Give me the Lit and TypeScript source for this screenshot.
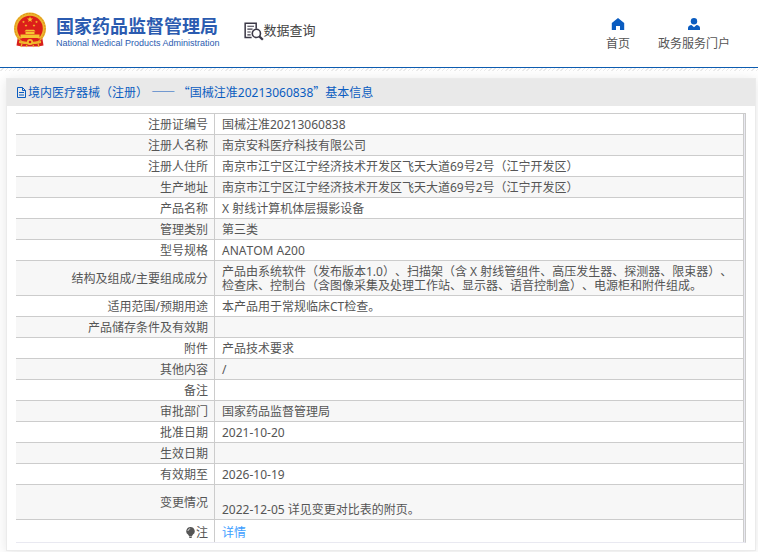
import { LitElement, html, css, svg, nothing } from "lit";
import { customElement } from "lit/decorators.js";

interface Row {
  label: string;
  value: string;
  /** The value starts with an empty line. */
  leadingBreak?: boolean;
}

const ROWS: Row[] = [
  { label: "注册证编号", value: "国械注准20213060838" },
  { label: "注册人名称", value: "南京安科医疗科技有限公司" },
  { label: "注册人住所", value: "南京市江宁区江宁经济技术开发区飞天大道69号2号（江宁开发区）" },
  { label: "生产地址", value: "南京市江宁区江宁经济技术开发区飞天大道69号2号（江宁开发区）" },
  { label: "产品名称", value: "X 射线计算机体层摄影设备" },
  { label: "管理类别", value: "第三类" },
  { label: "型号规格", value: "ANATOM A200" },
  {
    label: "结构及组成/主要组成成分",
    value:
      "产品由系统软件（发布版本1.0）、扫描架（含 X 射线管组件、高压发生器、探测器、限束器）、检查床、控制台（含图像采集及处理工作站、显示器、语音控制盒）、电源柜和附件组成。",
  },
  { label: "适用范围/预期用途", value: "本产品用于常规临床CT检查。" },
  { label: "产品储存条件及有效期", value: "" },
  { label: "附件", value: "产品技术要求" },
  { label: "其他内容", value: "/" },
  { label: "备注", value: "" },
  { label: "审批部门", value: "国家药品监督管理局" },
  { label: "批准日期", value: "2021-10-20" },
  { label: "生效日期", value: "" },
  { label: "有效期至", value: "2026-10-19" },
  { label: "变更情况", value: "2022-12-05 详见变更对比表的附页。", leadingBreak: true },
];

const star = (cx: number, cy: number, r: number) => {
  const points = Array.from({ length: 10 }, (_, i) => {
    const a = -Math.PI / 2 + (i * Math.PI) / 5;
    const d = i % 2 ? r * 0.4 : r;
    return `${(cx + d * Math.cos(a)).toFixed(2)},${(cy + d * Math.sin(a)).toFixed(2)}`;
  }).join(" ");
  return svg`<polygon points=${points} fill="#f8c62c" />`;
};

@customElement("site-header")
export class SiteHeader extends LitElement {
  static styles = css`
    :host {
      display: block;
    }
    .bar {
      display: flex;
      align-items: center;
      justify-content: space-between;
      height: 67px;
      padding: 0 28px 0 13px;
      background: #fff;
      border-bottom: 1px solid #0d5cb0;
    }
    .hatch {
      height: 3px;
      background: repeating-linear-gradient(135deg, #fff 0 2px, #ebebeb 2px 3px);
    }
    .left,
    .brand,
    .search,
    .nav {
      display: flex;
      align-items: center;
    }
    .left {
      gap: 24px;
      padding-bottom: 4px;
    }
    a {
      color: inherit;
      text-decoration: none;
    }
    .brand {
      gap: 9px;
      color: #2b5bb0;
    }
    .names {
      display: flex;
      flex-direction: column;
      white-space: nowrap;
    }
    .zh {
      font-size: 18px;
      font-weight: 700;
      line-height: 22px;
    }
    .en {
      font: 9px/12px "Liberation Sans", Arial, sans-serif;
    }
    .emblem {
      margin-bottom: 4px;
    }
    .search {
      color: #444;
      font-size: 13px;
      line-height: 18px;
      padding-bottom: 3px;
    }
    .search svg {
      margin-top: 3px;
    }
    .nav {
      gap: 28px;
      padding-top: 3px;
    }
    .item {
      display: flex;
      flex-direction: column;
      align-items: center;
      gap: 5px;
      line-height: 18px;
      font-size: 12px;
      color: #555;
    }
    svg {
      display: block;
      flex: none;
    }
  `;

  render() {
    return html`
      <header class="bar">
        <div class="left">
          <a class="brand" href="#">
            <svg class="emblem" width="34" height="36" viewBox="0 0 34 36" aria-hidden="true">
              <path d="M5 24 3.500 33.500 9 34.500h16l5.500-1L29 24Z" fill="#d8201c" />
              <circle cx="17" cy="16.500" r="16" fill="#eeb52c" />
              <circle cx="17" cy="16.500" r="15" fill="none" stroke="#d98d1c" stroke-width="1" stroke-dasharray="2 1" />
              <circle cx="17" cy="16.500" r="12.800" fill="#dc1e1a" />
              ${star(17, 7.5, 3.2)} ${star(10.5, 10, 1.5)} ${star(23.5, 10, 1.5)}
              ${star(13, 13.5, 1.5)} ${star(21, 13.5, 1.5)}
              <path d="M11.500 19.500h11l-1.500-1.700h-8zM12.500 20h9v2h-9zM7.500 22.500h19v3.500h-19z" fill="#f5c431" />
              <path d="M6.500 26.500h21c-2 3-6 4.300-10.500 4.300s-8.500-1.300-10.500-4.300Z" fill="#dc1e1a" />
              <path d="M6 29c4 0 7 1 11 1s7-1 11-1v2c-3 1-7 1-11 1s-8 0-11-1Z" fill="#efb42b" />
              <circle cx="17" cy="30" r="3" fill="#f3bd2d" />
              <circle cx="17" cy="30" r="1.300" fill="#dc1e1a" />
              <path d="M9 31.500 8 35M25 31.500l1 3.500M14 33l-1 2M20 33l1 2" stroke="#efb42b" stroke-width="1.200" />
            </svg>
            <span class="names">
              <span class="zh">国家药品监督管理局</span>
              <span class="en" lang="en">National Medical Products Administration</span>
            </span>
          </a>
          <a class="search" href="#">
            <svg width="20" height="19" viewBox="0 0 21 20" fill="none" stroke="#3c3947" aria-hidden="true">
              <path d="M8 16.200H1.200V1.200H12.800V7" stroke-width="1.600" />
              <path d="M3.500 4.500h7M3.500 7.500h5.500M3.500 10.500h3.500M3.500 13.500h3.500" stroke-width="1.200" />
              <circle cx="13" cy="12" r="4.300" stroke-width="1.700" />
              <path d="m16 15.200 3.800 3.500" stroke-width="2.400" />
            </svg>
            数据查询
          </a>
        </div>
        <nav class="nav">
          <a class="item" href="#">
            <svg width="14" height="12" viewBox="0 0 14 12" aria-hidden="true">
              <path d="M7 0 .800 5v1.500V12H5V8h4v4h4.200V5Z" fill="#0a5cc0" />
            </svg>
            首页
          </a>
          <a class="item" href="#">
            <svg width="14" height="12" viewBox="0 0 14 12" aria-hidden="true">
              <circle cx="7" cy="3.200" r="3.200" fill="#0a5cc0" />
              <path d="M1 12V10c0-1.800 1.500-2.800 3.500-3L7 9.200 9.500 7c2 .200 3.500 1.200 3.500 3v2Z" fill="#0a5cc0" />
            </svg>
            政务服务门户
          </a>
        </nav>
      </header>
      <div class="hatch"></div>
    `;
  }
}

@customElement("info-card")
export class InfoCard extends LitElement {
  static styles = css`
    :host {
      display: block;
    }
    .card {
      background: #fff;
      border: 1px solid #ebebeb;
      box-shadow: 0 2px 12px rgba(0, 0, 0, 0.1);
    }
    .title {
      display: flex;
      align-items: center;
      height: 27px;
      margin: 0;
      padding: 0 9px;
      background: #e9e9e9;
      color: #0a5cc0;
      font-size: 12px;
      font-weight: 400;
      line-height: 18px;
    }
    .cjk {
      font-family: "Noto Sans CJK SC", sans-serif;
    }
    .title svg {
      flex: none;
      margin-right: 1px;
    }
    .frame {
      margin: 7px 9px;
      padding-right: 1px;
      background: #e9e9f1;
      border-top: 1px solid #ccc;
      border-right: 1px solid #ccc;
      border-bottom: 1px solid #e9e9f1;
    }
    table {
      width: 100%;
      border-spacing: 0;
      table-layout: fixed;
      background: #fff;
      font-size: 12px;
      line-height: 14px;
    }
    .label-col {
      width: 199px;
    }
    th,
    td {
      height: 14px;
      padding: 4px 6px 2px 7px;
      border-right: 1px solid #ccc;
      border-bottom: 1px solid #ccc;
      vertical-align: middle;
    }
    th {
      font-weight: 400;
      text-align: right;
    }
    td {
      text-align: left;
    }
    tr:nth-child(even) {
      background: #f7f7f7;
    }
    tr:last-child > * {
      padding-top: 6px;
      border-bottom: 0;
    }
    .bulb {
      display: inline-block;
      vertical-align: -1px;
    }
    .detail {
      color: #409eff;
      text-decoration: none;
    }
  `;

  render() {
    return html`
      <section class="card">
        <h1 class="title">
          <svg width="11" height="11" viewBox="0 0 11 11" fill="none" stroke="#0a5cc0" stroke-width="1" aria-hidden="true">
            <path d="M1.500.500H6.500L9.500 3.500V10.500H1.500ZM6.500.500V3.500H9.500M3 5.500H8M3 8H8" />
          </svg>
          <span
            >境内医疗器械（注册）
            <span class="cjk" lang="zh-CN">—— “</span>国械注准20213060838<span class="cjk" lang="zh-CN">”</span>基本信息</span
          >
        </h1>
        <div class="frame">
          <table>
            <colgroup>
              <col class="label-col" />
              <col />
            </colgroup>
            <tbody>
              ${ROWS.map(
                (row) => html`<tr>
                  <th scope="row">${row.label}</th>
                  <td>${row.leadingBreak ? html`<br />` : nothing}${row.value}</td>
                </tr>`
              )}
              <tr>
                <th scope="row">
                  <svg class="bulb" width="11" height="11" viewBox="0 0 11 11" aria-hidden="true">
                    <path d="M5.500 0a4.200 4.200 0 0 1 2.500 7.600L7 9H4L3 7.600A4.200 4.200 0 0 1 5.500 0ZM4 9.500h3V10.200L6.200 11H4.800L4 10.200Z" fill="#555" />
                    <path d="M3 4C3 2.800 4 1.800 5.200 1.800" fill="none" stroke="#fff" stroke-width=".8" />
                  </svg>注
                </th>
                <td><a class="detail" href="#">详情</a></td>
              </tr>
            </tbody>
          </table>
        </div>
      </section>
    `;
  }
}

@customElement("app-root")
export class AppRoot extends LitElement {
  static styles = css`
    :host {
      display: block;
      overflow: hidden;
      background: #fff;
      color: #555;
      font-family: "Noto Sans", "Noto Sans CJK SC", sans-serif;
      font-size: 12px;
      font-kerning: none;
      text-spacing-trim: space-all;
    }
    .content {
      padding: 7px 2px 2px 6px;
    }
  `;

  render() {
    return html`
      <site-header></site-header>
      <main class="content"><info-card></info-card></main>
    `;
  }
}
